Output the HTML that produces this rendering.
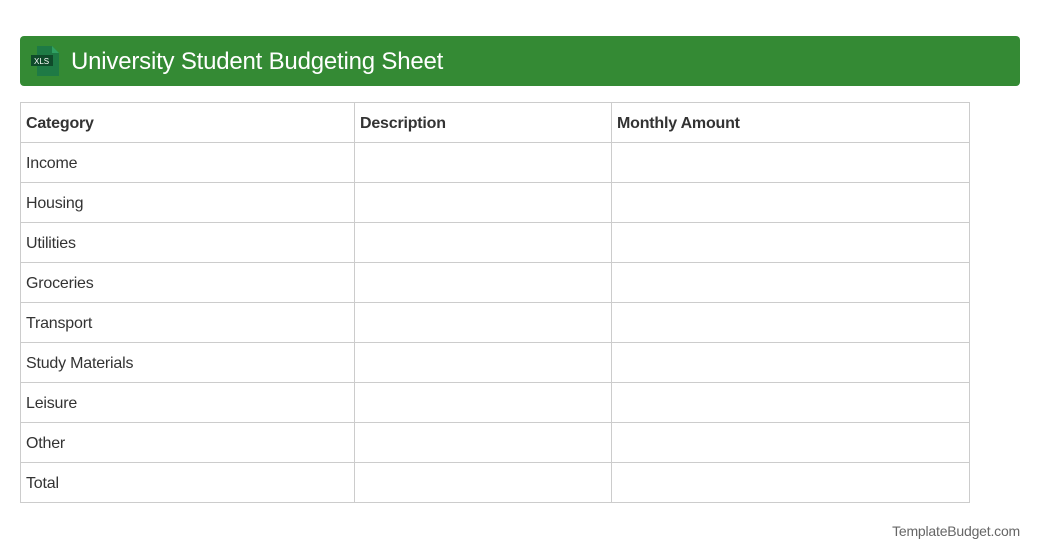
<!DOCTYPE html><html><head><style>
body{margin:0;background:#fff;font-family:"Liberation Sans",sans-serif;width:1040px;height:560px;position:relative}
.bar{position:absolute;left:20px;top:36px;width:1000px;height:50px;background:#348a34;border-radius:4px}
.bar h1{position:absolute;left:51px;top:13px;margin:0;font-weight:normal;font-size:24px;color:#fff;line-height:26px;letter-spacing:-0.2px}
.ic{position:absolute;left:11px;top:10px}
table{position:absolute;left:20px;top:102px;border-collapse:collapse;width:950px}
tr{height:40px}
td{border:1px solid #ccc;padding:2px 5px 0;font-size:16px;line-height:18px;color:#333;letter-spacing:-0.2px}
tr:first-child td{font-weight:bold}
.f{position:absolute;right:20px;top:523px;font-size:14px;color:#666;letter-spacing:-0.2px}
</style></head><body>
<div class="bar"><svg class="ic" width="30" height="30" viewBox="0 0 30 30"><path d="M6 0H21L28 7V30H6Z" fill="#1e7a45"/><path d="M21 0V7H28Z" fill="#2fa062"/><rect x="0" y="9" width="22" height="11" fill="#0f4a2a"/><text x="3" y="18" font-size="8" fill="#fff" font-family="Liberation Sans">XLS</text></svg><h1>University Student Budgeting Sheet</h1></div>
<table>
<tr><td style="width:323px">Category</td><td style="width:246px">Description</td><td>Monthly Amount</td></tr>
<tr><td>Income</td><td></td><td></td></tr>
<tr><td>Housing</td><td></td><td></td></tr>
<tr><td>Utilities</td><td></td><td></td></tr>
<tr><td>Groceries</td><td></td><td></td></tr>
<tr><td>Transport</td><td></td><td></td></tr>
<tr><td>Study Materials</td><td></td><td></td></tr>
<tr><td>Leisure</td><td></td><td></td></tr>
<tr><td>Other</td><td></td><td></td></tr>
<tr><td>Total</td><td></td><td></td></tr>
</table>
<div class="f">TemplateBudget.com</div>
</body></html>
